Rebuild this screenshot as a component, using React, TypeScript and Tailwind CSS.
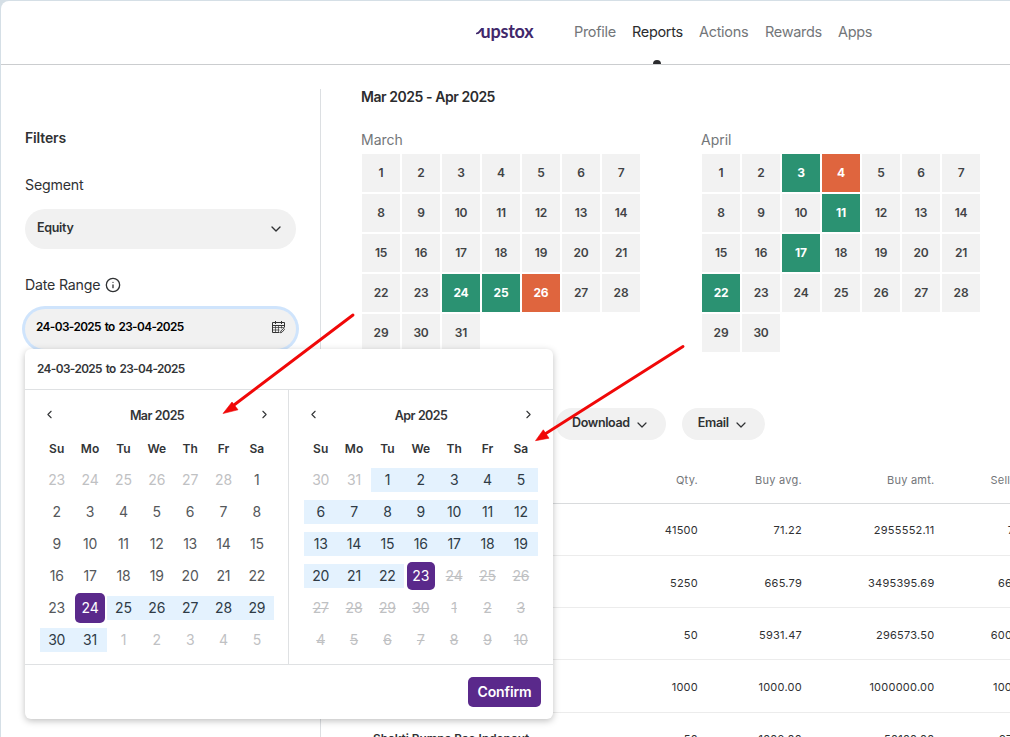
import { ChevronDown, ChevronLeft, ChevronRight, Info } from "lucide-react";
import clsx from "clsx";

const NAV = [
	{ label: "Profile", width: "w-[42px]" },
	{ label: "Reports", width: "w-[51px]", active: true },
	{ label: "Actions", width: "w-[50px]" },
	{ label: "Rewards", width: "w-[57px]" },
	{ label: "Apps", width: "w-[35px]" },
];

const WEEKDAYS = ["Su", "Mo", "Tu", "We", "Th", "Fr", "Sa"];

const ROWS = [
	{ name: "", qty: "41500", buyAvg: "71.22", buyAmt: "2955552.11", sellAvg: "71.54" },
	{ name: "", qty: "5250", buyAvg: "665.79", buyAmt: "3495395.69", sellAvg: "669.20" },
	{ name: "", qty: "50", buyAvg: "5931.47", buyAmt: "296573.50", sellAvg: "6002.50" },
	{ name: "", qty: "1000", buyAvg: "1000.00", buyAmt: "1000000.00", sellAvg: "1000.00" },
	{
		name: "Shakti Pumps Bse Indepaut",
		qty: "50",
		buyAvg: "1002.00",
		buyAmt: "50100.00",
		sellAvg: "976.00",
	},
];

type Day = { day: number; state: "normal" | "out" | "range" | "selected" | "disabled" };

function days(from: number, to: number, state: Day["state"]): Day[] {
	return Array.from({ length: to - from + 1 }, (_, i) => ({ day: from + i, state }));
}

const MARCH = [
	...days(23, 28, "out"),
	...days(1, 23, "normal"),
	...days(24, 24, "selected"),
	...days(25, 31, "range"),
	...days(1, 5, "out"),
];

const APRIL = [
	...days(30, 31, "out"),
	...days(1, 22, "range"),
	...days(23, 23, "selected"),
	...days(24, 30, "disabled"),
	...days(1, 10, "disabled"),
];

function Logo() {
	return (
		<div className="flex w-[58px] items-center pb-[3px] text-[#41286b]">
			<svg width="6" height="12" viewBox="0 0 6 12" fill="none" className="shrink-0">
				<path
					d="M.9 8.4C3 8.4 3.6 6.2 5.8 4"
					stroke="currentColor"
					strokeWidth="1.9"
					strokeLinecap="round"
				/>
			</svg>
			<span className="-ml-[1.5px] font-[Lato] text-[18px] leading-6 font-bold tracking-[-0.2px]">
				upstox
			</span>
		</div>
	);
}

function Header() {
	return (
		<header className="flex h-[64px] shrink-0 border-b border-[#cbcdcf] pl-[475px]">
			<div className="flex items-center">
				<Logo />
			</div>
			<nav className="ml-10 flex gap-4">
				{NAV.map((item) => (
					<a
						key={item.label}
						className={clsx(
							"relative flex h-[63px] items-center pb-0.5 text-[14.5px] tracking-[-0.32px] whitespace-nowrap",
							item.width,
							item.active ? "text-[#2b2c2e]" : "text-[#737679]"
						)}
					>
						{item.label}
						{item.active && (
							<span className="absolute bottom-0 left-[21px] h-1 w-2 rounded-t-full bg-[#2b2c2e]" />
						)}
					</a>
				))}
			</nav>
		</header>
	);
}

function CalendarIcon() {
	return (
		<svg
			width="13"
			height="13"
			viewBox="0 0 13 13"
			fill="none"
			stroke="#333"
			strokeWidth="1"
			className="-mt-[3px]"
		>
			<path d="M12.5 6.5v-5H.5v10h7M.5 4.5h12M3.5 0v3M9.5 0v3" />
			<path d="M3.5 5v6M6.5 5v6M9.5 5v2.5M1 6.5h11M1 9h6.5" strokeWidth=".7" />
			<path d="M8.5 11.8 8.9 10l2.7-2.7 1 1L10 11.2l-1.5.6Z" strokeWidth=".9" />
		</svg>
	);
}

function Sidebar() {
	return (
		<aside className="mt-6 w-[320px] shrink-0 border-r border-[#dcdfe2] pl-6 text-[#2f3133]">
			<h2 className="mt-[39px] text-[14px] leading-5 font-semibold tracking-[-0.15px]">Filters</h2>
			<div className="mt-[27px] text-[14.2px] leading-5 tracking-[-0.2px]">Segment</div>
			<div className="mt-[14px] flex h-10 w-[271px] items-center justify-between rounded-full bg-[#f1f1f1] pr-3 pl-3">
				<span className="-mt-0.5 text-[12.5px] font-semibold tracking-[-0.3px]">Equity</span>
				<ChevronDown size={16} strokeWidth={2} />
			</div>
			<div className="mt-[26px] flex items-center gap-[5px] text-[14.2px] leading-5 tracking-[-0.2px]">
				Date Range
				<Info size={16} strokeWidth={2} />
			</div>
			<div className="mt-[14px] flex h-10 w-[271px] items-center justify-between rounded-full bg-[#f1f1f1] pr-[11px] pl-[11px] ring-[3px] ring-[#cfe4fc]">
				<span className="-mt-0.5 text-[11.8px] font-semibold tracking-[-0.6px] text-black [word-spacing:1.4px]">
					24-03-2025 to 23-04-2025
				</span>
				<CalendarIcon />
			</div>
		</aside>
	);
}

type HeatProps = { name: string; count: number; profit: number[]; loss: number[] };

function HeatMonth({ name, count, profit, loss }: HeatProps) {
	return (
		<div className="w-[340px]">
			<div className="text-[14px] leading-5 text-[#737679]">{name}</div>
			<div className="mt-1 ml-px grid w-[278px] grid-cols-7 gap-0.5">
				{Array.from({ length: count }, (_, i) => i + 1).map((day) => (
					<div
						key={day}
						className={clsx(
							"flex h-[38px] items-center justify-center text-[12px] tracking-[-0.2px]",
							profit.includes(day) && "bg-[#2b9272] font-bold text-white",
							loss.includes(day) && "bg-[#df653e] font-bold text-white",
							!profit.includes(day) && !loss.includes(day) && "bg-[#f2f2f2] font-semibold text-[#414345]"
						)}
					>
						{day}
					</div>
				))}
			</div>
		</div>
	);
}

function PillButton({ label }: { label: string }) {
	return (
		<button className="flex h-8 items-center gap-1 rounded-full bg-[#f1f1f1] px-4 text-[12.5px] font-semibold text-[#2f3133]">
			<span className="-mt-0.5 tracking-[-0.35px]">{label}</span>
			<ChevronDown size={16} strokeWidth={1.8} className="mt-0.5" />
		</button>
	);
}

function Report() {
	return (
		<main className="ml-10 w-[760px] shrink-0 pt-[22px]">
			<h1 className="text-[14px] leading-5 font-semibold tracking-[-0.52px] text-[#2b2c2e] [word-spacing:0.3px]">
				Mar 2025 - Apr 2025
			</h1>
			<div className="mt-[23px] flex">
				<HeatMonth name="March" count={31} profit={[24, 25]} loss={[26]} />
				<HeatMonth name="April" count={30} profit={[3, 11, 17, 22]} loss={[4]} />
			</div>
			<div className="mt-14 ml-[195px] flex gap-4">
				<PillButton label="Download" />
				<PillButton label="Email" />
			</div>
			<table className="mt-[14px] table-fixed border-collapse text-right text-[11px] tracking-[0.25px] text-[#2f3133]">
				<colgroup>
					<col className="w-[237px]" />
					<col className="w-[100px]" />
					<col className="w-[104px]" />
					<col className="w-[132.5px]" />
					<col className="w-[102px]" />
					<col className="w-[84.5px]" />
				</colgroup>
				<thead>
					<tr className="h-[49px] border-b border-[#d9dbdd] text-[#737679]">
						<th />
						<th className="pt-[3px] font-normal">Qty.</th>
						<th className="pt-[3px] font-normal">Buy avg.</th>
						<th className="pt-[3px] font-normal">Buy amt.</th>
						<th className="pt-[3px] font-normal">Sell avg.</th>
						<th />
					</tr>
				</thead>
				<tbody>
					{ROWS.map((row, i) => (
						<tr key={i} className="h-[52.25px] border-b border-[#ececec]">
							<td className="pt-[3px] pl-3 text-left text-[11.8px] font-semibold tracking-[0.03px] whitespace-nowrap">
								{row.name}
							</td>
							<td className="pt-[3px]">{row.qty}</td>
							<td className="pt-[3px]">{row.buyAvg}</td>
							<td className="pt-[3px]">{row.buyAmt}</td>
							<td className="pt-[3px]">{row.sellAvg}</td>
							<td />
						</tr>
					))}
				</tbody>
			</table>
		</main>
	);
}

type PickerProps = { title: string; cells: Day[]; selectedClass: string };

function PickerMonth({ title, cells, selectedClass }: PickerProps) {
	return (
		<div className="w-[233.5px]">
			<div className="flex h-[52px] items-center justify-between pr-[2px] pl-[2.5px]">
				<ChevronLeft size={13} strokeWidth={2} className="-mt-[3px]" />
				<span className="text-[12.5px] font-semibold tracking-[-0.6px] [word-spacing:0.5px]">{title}</span>
				<ChevronRight size={13} strokeWidth={2} className="-mt-[3px]" />
			</div>
			<div className="grid grid-cols-7 text-center text-[12px] leading-[14px] font-semibold">
				{WEEKDAYS.map((day) => (
					<span key={day}>{day}</span>
				))}
			</div>
			<div className="mt-2 grid grid-cols-7 text-[14px] tracking-[-0.2px]">
				{cells.map((cell, i) => (
					<div key={i} className="flex h-8 items-center justify-center">
						{cell.state === "selected" ? (
							<span
								className={clsx(
									"flex shrink-0 items-center justify-center rounded-[5px] bg-[#5a298b] pb-px text-white",
									selectedClass
								)}
							>
								{cell.day}
							</span>
						) : (
							<span
								className={clsx(
									"flex h-6 w-full items-center justify-center pb-px",
									cell.state === "normal" && "text-[#55585b]",
									cell.state === "out" && "text-[#bfc1c3]",
									cell.state === "disabled" && "text-[#bfc1c3] line-through",
									cell.state === "range" && "bg-[#e4f2fe] text-[#2f3b46]"
								)}
							>
								{cell.day}
							</span>
						)}
					</div>
				))}
			</div>
		</div>
	);
}

function DatePicker() {
	return (
		<div className="absolute top-[349px] left-[25px] flex h-[370px] w-[528px] flex-col rounded-md bg-white text-[#333537] shadow-[0_2px_7px_rgba(0,0,0,0.25)]">
			<div className="h-[41px] border-b border-[#dfe1e3] pt-2.5 pl-3 text-[11.8px] leading-5 font-semibold tracking-[-0.6px] [word-spacing:1.4px]">
				24-03-2025 to 23-04-2025
			</div>
			<div className="flex h-[275px] border-b border-[#dfe1e3]">
				<div className="w-[264px] border-r border-[#dfe1e3] pl-[15px]">
					<PickerMonth title="Mar 2025" cells={MARCH} selectedClass="size-[30px]" />
				</div>
				<div className="pl-[15px]">
					<PickerMonth title="Apr 2025" cells={APRIL} selectedClass="size-7" />
				</div>
			</div>
			<div className="flex justify-end pt-3 pr-3">
				<button className="h-[30px] w-[73px] rounded-[5px] bg-[#5a298b] pb-px text-[14px] font-semibold tracking-[-0.15px] text-white">
					Confirm
				</button>
			</div>
		</div>
	);
}

function Arrows() {
	return (
		<svg
			className="pointer-events-none absolute inset-0"
			width="1010"
			height="737"
			viewBox="0 0 1010 737"
			fill="#f00808"
			stroke="#f00808"
		>
			<path d="M353 315 234 405M683 346.5 545 434" strokeWidth="2.9" strokeLinecap="round" />
			<path d="M223 413.5 232 402 238 409.8ZM535.5 440.7 543.3 429.8 549 438.2Z" strokeWidth=".6" />
		</svg>
	);
}

export default function App() {
	return (
		<div className="h-[737px] w-[1010px] overflow-hidden bg-[#d5dfe6] pt-px pl-px font-[Inter,sans-serif]">
			<div className="flex h-[736px] w-[1009px] flex-col overflow-hidden rounded-tl-lg bg-white">
				<Header />
				<div className="flex min-h-0 grow">
					<Sidebar />
					<Report />
				</div>
			</div>
			<DatePicker />
			<Arrows />
		</div>
	);
}
